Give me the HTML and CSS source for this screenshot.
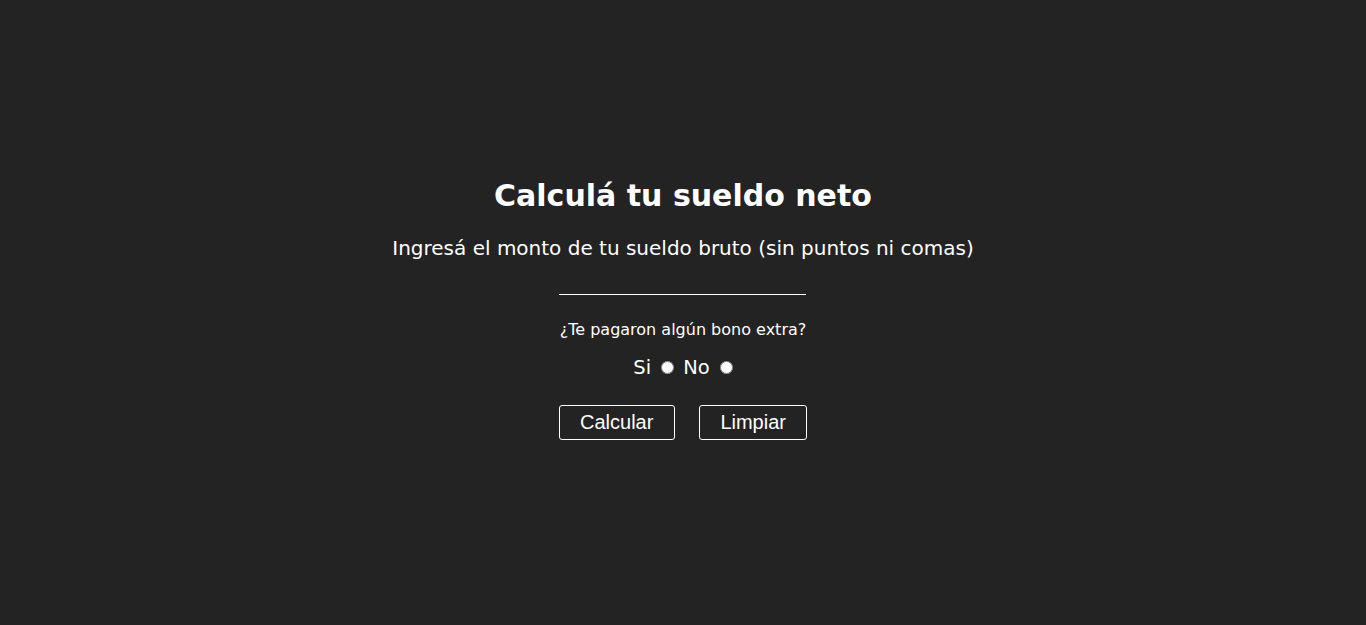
FILE: index.html
```html
<!DOCTYPE html>
<html lang="es">
<head>
<meta charset="utf-8">
<title>Calculá tu sueldo neto</title>
<link rel="stylesheet" href="styles.css">
</head>
<body>
<main class="calc">
  <h1 class="title">Calculá tu sueldo neto</h1>
  <p class="subtitle">Ingresá el monto de tu sueldo bruto (sin puntos ni comas)</p>
  <input class="amount" type="text">
  <p class="question">¿Te pagaron algún bono extra?</p>
  <div class="options">
    <label class="opt">Si <input type="radio" name="bono"></label>
    <label class="opt">No <input type="radio" name="bono"></label>
  </div>
  <div class="actions">
    <button class="btn btn-calc" type="button">Calcular</button>
    <button class="btn btn-clear" type="button">Limpiar</button>
  </div>
</main>
</body>
</html>
```
FILE: styles.css
```css
html, body {
  margin: 0;
  padding: 0;
  height: 100%;
}
body {
  background: #232323;
  color: #ffffff;
  font-family: "DejaVu Sans", "Open Sans", sans-serif;
  display: flex;
  align-items: center;
  justify-content: center;
}
.calc {
  display: flex;
  flex-direction: column;
  align-items: center;
  padding-bottom: 8px;
}
.title {
  font-size: 30px;
  font-weight: 700;
  margin: 0;
  line-height: 36px;
}
.subtitle {
  font-size: 20px;
  margin: 22px 0 0;
  line-height: 24px;
}
.amount {
  margin-top: 12px;
  width: 247px;
  height: 22px;
  padding: 0;
  background: transparent;
  border: none;
  border-bottom: 1px solid #ffffff;
  color: #ffffff;
  outline: none;
}
.question {
  font-size: 16px;
  margin: 25px 0 0;
  line-height: 20px;
}
.options {
  margin-top: 16px;
  display: flex;
  gap: 9px;
  font-size: 19.5px;
  line-height: 24px;
}
.opt {
  display: flex;
  align-items: center;
  gap: 10px;
}
.opt input {
  margin: 0;
  width: 13px;
  height: 13px;
}
.actions {
  margin-top: 25px;
  display: flex;
  gap: 24px;
}
.btn {
  font-family: "Liberation Sans", Arial, sans-serif;
  font-size: 20px;
  color: #ffffff;
  background: transparent;
  border: 1px solid #ffffff;
  border-radius: 3px;
  height: 35px;
  padding: 0 20.5px;
}
```
